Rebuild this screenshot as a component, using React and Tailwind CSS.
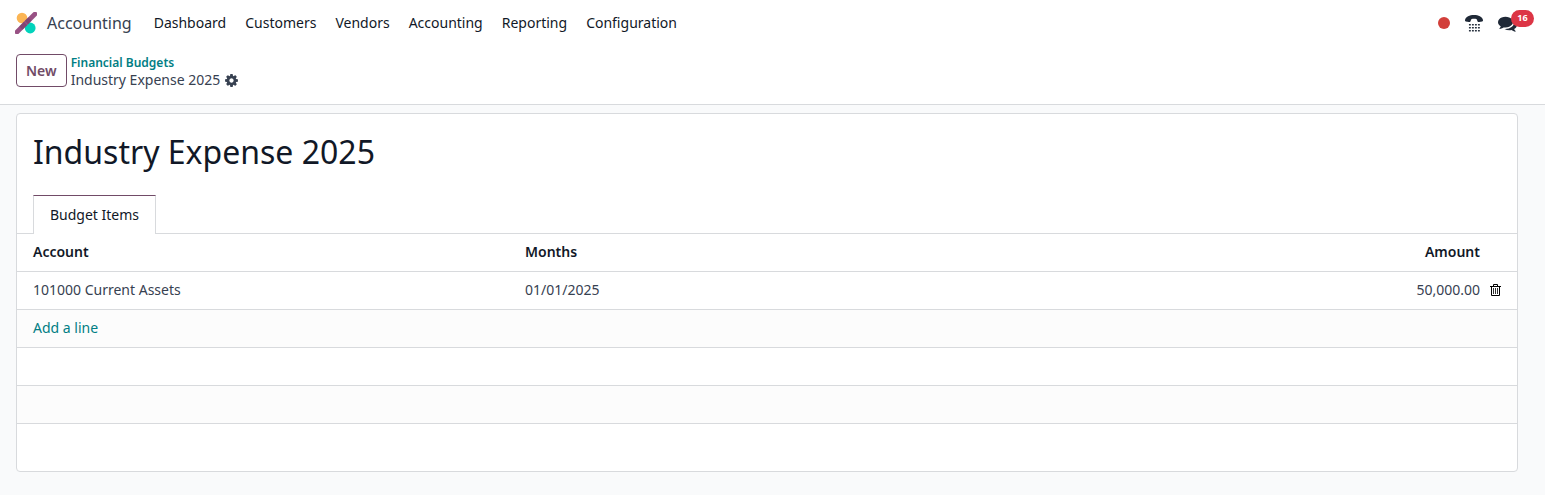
const navItems = ['Dashboard', 'Customers', 'Vendors', 'Accounting', 'Reporting', 'Configuration'];
const lines = [{ account: '101000 Current Assets', months: '01/01/2025', amount: '50,000.00' }];

function AppLogo() {
  return (
    <svg viewBox="0 0 22 22" className="size-[22px]" aria-hidden="true">
      <circle cx="7" cy="6" r="5.3" fill="#fbb554" />
      <circle cx="15.2" cy="16" r="5.4" fill="#02d3bc" />
      <path d="M2 20L20 2" stroke="#985184" strokeWidth="4.6" strokeLinecap="round" />
      <path d="M6 16L10.500 11.500M11.500 10.500L15 7" stroke="#6b3f66" strokeWidth="4.6" opacity=".5" />
    </svg>
  );
}

function GearIcon() {
  return (
    <svg viewBox="0 0 1792 1792" className="size-[15px]" fill="currentColor" aria-hidden="true">
      <path d="M1152 896q0-106-75-181t-181-75-181 75-75 181 75 181 181 75 181-75 75-181zm512-109v222q0 12-8 23t-20 13l-185 28q-19 54-39 91 35 50 107 138 10 12 10 25t-9 23q-27 37-99 108t-94 71q-12 0-26-9l-138-108q-44 23-91 38-16 136-29 186-7 28-36 28h-222q-14 0-24.5-8.5t-11.5-21.5l-28-184q-49-16-90-37l-141 107q-10 9-25 9-14 0-25-11-126-114-165-168-7-10-7-23 0-12 8-23 15-21 51-66.5t54-70.5q-27-50-41-99l-183-27q-13-2-21-12.5t-8-23.5v-222q0-12 8-23t19-13l186-28q14-46 39-92-40-57-107-138-10-12-10-24 0-10 9-23 26-36 98.5-107.5t94.5-71.5q13 0 26 10l138 107q44-23 91-38 16-136 29-186 7-28 36-28h222q14 0 24.5 8.5t11.5 21.5l28 184q49 16 90 37l142-107q9-9 24-9 13 0 25 10 129 119 165 170 7 8 7 22 0 12-8 23-15 21-51 66.5t-54 70.5q26 50 41 98l183 28q13 2 21 12.5t8 23.500z" />
    </svg>
  );
}

function PhoneIcon() {
  return (
    <svg viewBox="0 0 18 18" className="size-[18px]" fill="#1f2937" aria-hidden="true">
      <path d="M0 6C.8 2.800 4.500 1 9 1s8.200 1.800 9 5c.2.800-.1 1.200-.7 1.400l-3.300.7c-.7.100-1.100-.1-1.400-.7l-.9-2.200C11 4.800 10 4.700 9 4.700s-2 .1-2.700.5l-.9 2.200c-.3.600-.7.800-1.400.7L.7 7.400C.1 7.200-.2 6.800 0 6z" />
      {[10, 13, 16].map((y) =>
        [4, 7, 10, 13].map((x) => <rect key={`${x}-${y}`} x={x - 0.1} y={y} width="2" height="1.500" rx=".4" />)
      )}
    </svg>
  );
}

function ChatIcon() {
  return (
    <svg viewBox="0 0 1792 1792" className="size-[19px]" fill="#1f2937" aria-hidden="true">
      <path d="M1408 768q0 139-94 257t-256.5 186.5-353.5 68.5q-86 0-176-16-124 88-278 128-36 9-86 16h-3q-11 0-20.5-8t-11.5-21q-1-3-1-6.5t.5-6.500 2-6l2.500-5 3.500-5.500 4-5 4.500-5 4-4.500q5-6 23-25t26-29.500 22.500-29 25-38.500 20.500-44q-124-72-195-177t-71-224q0-139 94-257t256.500-186.500 353.500-68.500 353.500 68.500 256.500 186.500 94 257zm384 256q0 120-71 224.500t-195 176.500q10 24 20.500 44t25 38.500 22.500 29 26 29.500 23 25q1 1 4 4.500t4.500 5 4 5 3.500 5.500l2.500 5 2 6 .5 6.500-1 6.500q-3 14-13 22t-22 7q-50-7-86-16-154-40-278-128-90 16-176 16-271 0-472-132 58 4 88 4 161 0 309-45t264-129q125-92 192-212t67-254q0-77-23-152 129 71 204 178t75 230z" />
    </svg>
  );
}

function TrashIcon() {
  return (
    <svg viewBox="0 0 11 12" className="h-[12px] w-[11px]" fill="none" stroke="#000" aria-hidden="true">
      <path d="M0 2.500H11M3.500 2.500V0.500H7.500V2.500M1.500 2.500V11.500H9.500V2.500" strokeLinejoin="round" />
      <path d="M3.500 4V10M5.500 4V10M7.500 4V10" strokeWidth=".8" />
    </svg>
  );
}

export default function App() {
  return (
    <div className="min-h-screen bg-[#f9fafb] pb-6 font-['Noto_Sans',sans-serif] text-sm text-[#374151]">
      <header className="border-b border-[#d8dadd] bg-white">
        <div className="flex h-[46px] items-center pr-3 pl-[15px]">
          <a href="#accounting" className="flex items-center gap-2.5 text-base text-[#374151]">
            <AppLogo />
            Accounting
          </a>
          <nav className="ml-[22px] flex gap-[19px] text-[#111827]">
            {navItems.map((item) => (
              <a key={item} href={`#${item.toLowerCase()}`}>{item}</a>
            ))}
          </nav>
          <div className="ml-auto flex items-center gap-[15px]">
            <span className="size-3 rounded-full bg-[#d23f3a]" />
            <button type="button" aria-label="Call">
              <PhoneIcon />
            </button>
            <button type="button" aria-label="Messages" className="relative mr-[16px]">
              <ChatIcon />
              <span className="absolute -top-1 left-[13px] flex h-[17px] w-[23px] items-center justify-center rounded-full bg-[#dc3545] text-[9px] font-bold text-white">
                16
              </span>
            </button>
          </div>
        </div>
        <div className="flex h-[58px] items-start gap-1 px-4 pt-2">
          <button type="button" className="h-[33px] rounded-[4px] border border-[#714b67] px-[9px] font-semibold text-[#714b67]">
            New
          </button>
          <div className="flex flex-col">
            <a href="#budgets" className="text-xs leading-[17px] font-semibold text-[#017e84]">Financial Budgets</a>
            <div className="flex items-center gap-1 leading-[18px]">
              <span>Industry Expense 2025</span>
              <button type="button" aria-label="Actions" className="text-[#374151]">
                <GearIcon />
              </button>
            </div>
          </div>
        </div>
      </header>

      <main className="mt-2 mr-[27px] ml-4 rounded-[4px] border border-[#d8dadd] bg-white pb-[10px]">
        <h1 className="px-4 pt-4 text-[32px] leading-[44px] text-[#111827]">Industry Expense 2025</h1>
        <div role="tablist" className="mt-[21px] flex border-b border-[#d8dadd] px-4">
          <button
            type="button"
            role="tab"
            aria-selected="true"
            className="-mb-px h-[39px] border-x border-t border-x-[#d8dadd] border-t-[#714b67] bg-white px-4 text-[#111827]"
          >
            Budget Items
          </button>
        </div>
        <table className="w-full table-fixed border-collapse">
          <thead>
            <tr className="h-[37px] border-b border-[#d8dadd] font-semibold text-[#111827]">
              <th scope="col" className="w-[33.6%] pl-4 text-left font-semibold">Account</th>
              <th scope="col" className="pl-1 text-left font-semibold">Months</th>
              <th scope="col" className="pr-1 text-right font-semibold">Amount</th>
              <th scope="col" aria-label="Delete" className="w-[33px]" />
            </tr>
          </thead>
          <tbody>
            {lines.map((line) => (
              <tr key={line.account} className="h-[38px] border-b border-[#d8dadd]">
                <td className="pl-4">{line.account}</td>
                <td className="pl-1">{line.months}</td>
                <td className="pr-1 text-right">{line.amount}</td>
                <td className="pl-[6px]">
                  <button type="button" aria-label="Delete line" className="block">
                    <TrashIcon />
                  </button>
                </td>
              </tr>
            ))}
            <tr className="h-[38px] border-b border-[#d8dadd] bg-[#fcfcfc]">
              <td colSpan={4} className="pl-4">
                <button type="button" className="text-[#017e84]">Add a line</button>
              </td>
            </tr>
            <tr className="h-[38px] border-b border-[#d8dadd]"><td colSpan={4} /></tr>
            <tr className="h-[38px] border-b border-[#d8dadd] bg-[#fcfcfc]"><td colSpan={4} /></tr>
            <tr className="h-[38px]"><td colSpan={4} /></tr>
          </tbody>
        </table>
      </main>
    </div>
  );
}
